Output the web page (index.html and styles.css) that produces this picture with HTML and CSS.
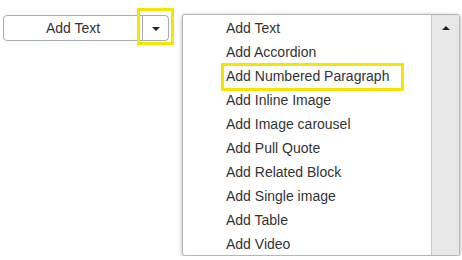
FILE: index.html
```html
<!DOCTYPE html>
<html lang="en">
<head>
    <meta charset="UTF-8">
    <title>Add block</title>
    <link rel="stylesheet" href="styles.css">
</head>
<body>
    <div class="page">
        <div class="btn-group">
            <button class="btn-main">Add Text</button>
            <button class="btn-toggle"><span class="caret"></span></button>
        </div>

        <div class="menu">
            <ul class="menu-list">
                <li>Add Text</li>
                <li>Add Accordion</li>
                <li class="marked">Add Numbered Paragraph</li>
                <li>Add Inline Image</li>
                <li>Add Image carousel</li>
                <li>Add Pull Quote</li>
                <li>Add Related Block</li>
                <li>Add Single image</li>
                <li>Add Table</li>
                <li>Add Video</li>
            </ul>
            <div class="scrollbar"><span class="arrow-up"></span></div>
        </div>
    </div>
</body>
</html>
```

FILE: styles.css
```css
body {
    margin: 0;
    background: #fff;
    font-family: "Liberation Sans", Arial, sans-serif;
    font-size: 14px;
    color: #333;
}

.page {
    display: flex;
    align-items: flex-start;
    padding: 14px 1px 0 3px;
}

.btn-group {
    display: flex;
    margin-top: 1px;
    border: 1px solid #aaa;
    border-radius: 4px;
    background: #fff;
}

.btn-group button {
    font: inherit;
    color: #333;
    background: transparent;
    border: 0;
    height: 24px;
    padding: 0;
}

.btn-main {
    width: 138px;
}

.btn-toggle {
    position: relative;
    width: 26px;
    border-left: 1px solid #aaa !important;
    display: flex;
    align-items: center;
    justify-content: center;
}

.btn-toggle::after {
    content: "";
    position: absolute;
    top: -8px;
    left: -6px;
    width: 37px;
    height: 37px;
    border: 3px solid #f5e500;
    box-sizing: border-box;
}

.caret {
    width: 0;
    height: 0;
    border-left: 4px solid transparent;
    border-right: 4px solid transparent;
    border-top: 4px solid #222;
    margin-top: 2px;
}

.menu {
    display: flex;
    margin-left: 13px;
    width: 278px;
    height: 242px;
    border: 1px solid #b5b5b5;
    border-radius: 3px;
    box-sizing: border-box;
    box-shadow: 0 1px 4px rgba(0, 0, 0, 0.3);
    background: #fff;
    overflow: hidden;
}

.menu-list {
    flex: 1;
    list-style: none;
    margin: 0;
    padding: 1px 0 0 43px;
}

.menu-list li {
    position: relative;
    height: 24px;
    line-height: 24px;
}

.menu-list .marked::after {
    content: "";
    position: absolute;
    top: -1px;
    left: -5px;
    width: 183px;
    height: 28px;
    border: 3px solid #f5e500;
    box-sizing: border-box;
}

.scrollbar {
    width: 27px;
    background: #e8e8e8;
    border-left: 1px solid #c8c8c8;
    display: flex;
    justify-content: center;
}

.arrow-up {
    width: 0;
    height: 0;
    margin-top: 11px;
    border-left: 4px solid transparent;
    border-right: 4px solid transparent;
    border-bottom: 4px solid #222;
}
```
